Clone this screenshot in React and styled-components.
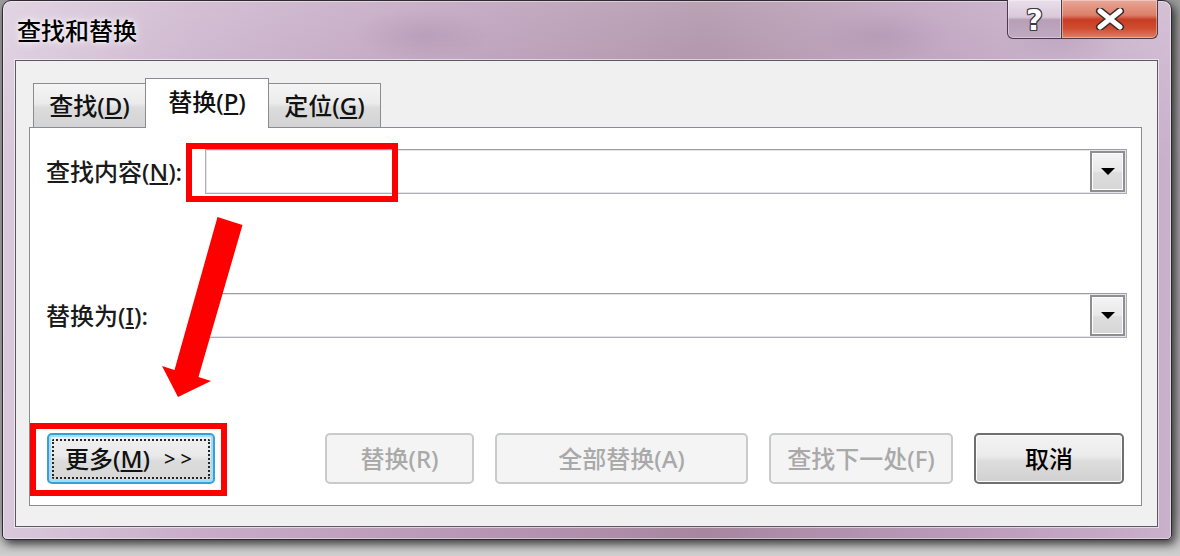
import React from "react";
import styled, { createGlobalStyle, css } from "styled-components";

const GlobalStyle = createGlobalStyle`
  html, body {
    margin: 0;
    padding: 0;
  }
  body {
    background: #bdbdbd;
    font-family: "Noto Sans", "Noto Sans CJK SC", sans-serif;
    font-weight: 500;
  }
`;

const Page = styled.div`
  position: relative;
  width: 1180px;
  height: 556px;
  overflow: hidden;
  background: linear-gradient(180deg, #9c9c9c 0%, #a8a8a8 92%, #cfcfcf 100%);
`;

const Window = styled.div`
  margin-left: 2px;
  width: 1170px;
  height: 540px;
  box-sizing: border-box;
  display: flex;
  flex-direction: column;
  border: 1px solid #2f2a31;
  border-radius: 9px 9px 5px 5px;
  background:
    linear-gradient(180deg, rgba(255, 255, 255, 0.22) 0%, rgba(255, 255, 255, 0) 30%),
    radial-gradient(ellipse 70px 26px at 420px 34px, rgba(140, 100, 140, 0.28), transparent),
    radial-gradient(ellipse 70px 26px at 880px 34px, rgba(140, 100, 140, 0.25), transparent),
    radial-gradient(ellipse 60px 24px at 1060px 38px, rgba(140, 100, 140, 0.22), transparent),
    linear-gradient(90deg, #d9c9db 0%, #c8aec9 16%, #b797b5 40%, #a7879f 60%, #b899b8 80%, #c9b0cb 100%);
  box-shadow: inset 0 0 0 1px rgba(255, 255, 255, 0.45), 3px 4px 10px rgba(0, 0, 0, 0.7);
`;

const TitleBar = styled.div`
  height: 59px;
  flex-shrink: 0;
  display: flex;
  justify-content: space-between;
  align-items: flex-start;
`;

const Title = styled.div`
  padding: 17px 0 0 14px;
  font-size: 24px;
  line-height: 26px;
  color: #000;
  text-shadow: 0 0 10px rgba(255, 255, 255, 0.9), 0 0 4px rgba(255, 255, 255, 0.8);
`;

const Captions = styled.div`
  display: flex;
  margin: -1px 13px 0 0;
`;

const CaptionButton = styled.div`
  box-sizing: border-box;
  width: ${(p) => p.$w}px;
  height: 39px;
  display: flex;
  align-items: center;
  justify-content: center;
  border: 1px solid #4a3a4c;
  border-top: none;
  box-shadow: inset 0 0 0 1px rgba(255, 255, 255, 0.35);
  ${(p) =>
    p.$close
      ? css`
          border-left: none;
          border-radius: 0 0 6px 0;
          background: linear-gradient(180deg, #e9a797 0%, #dc7f69 40%, #c83c22 52%, #cf4d31 75%, #e18165 100%);
        `
      : css`
          border-radius: 0 0 0 6px;
          background: linear-gradient(180deg, #ebdfeb 0%, #d9c8d9 45%, #b89fb8 52%, #c0a9c2 100%);
        `}
`;

const HelpGlyph = styled.span`
  font-family: "DejaVu Sans", sans-serif;
  font-weight: bold;
  font-size: 29px;
  line-height: 1;
  margin-top: 2px;
  color: #fff;
  text-shadow: 1px 0 0 #3b3b45, -1px 0 0 #3b3b45, 0 1px 0 #3b3b45, 0 -1px 0 #3b3b45,
    1px 1px 0 #3b3b45, -1px -1px 0 #3b3b45, 1px -1px 0 #3b3b45, -1px 1px 0 #3b3b45;
`;

const Client = styled.div`
  flex: 1;
  min-height: 0;
  margin: 0 13px 12px 12px;
  background: #f0f0f0;
  border: 1px solid #5e5862;
  box-shadow: 0 0 0 1px rgba(255, 255, 255, 0.55);
  padding: 17px 15px 20px 13px;
  display: flex;
  flex-direction: column;
`;

const TabStrip = styled.div`
  position: relative;
  z-index: 1;
  height: 49px;
  flex-shrink: 0;
  display: flex;
  align-items: flex-end;
  padding-left: 4px;
`;

const Tab = styled.div`
  box-sizing: border-box;
  width: ${(p) => p.$w}px;
  height: ${(p) => (p.$active ? 50 : 44)}px;
  margin-left: ${(p) => (p.$first ? 0 : -1)}px;
  margin-bottom: ${(p) => (p.$active ? -1 : 0)}px;
  border: 1px solid #898c95;
  border-bottom: none;
  display: flex;
  align-items: center;
  justify-content: center;
  padding-bottom: ${(p) => (p.$active ? 4 : 0)}px;
  font-size: 24px;
  line-height: 28px;
  color: #111;
  position: relative;
  z-index: ${(p) => (p.$active ? 2 : 1)};
  background: ${(p) =>
    p.$active ? "#fff" : "linear-gradient(180deg, #f5f5f5 0%, #ebebeb 45%, #dcdcdc 55%, #d3d3d3 100%)"};
`;

const Panel = styled.div`
  flex: 1;
  min-height: 0;
  background: #fff;
  border: 1px solid #898c95;
  padding: 21px 14px 21px 16px;
  display: flex;
  flex-direction: column;
`;

const FieldRow = styled.div`
  display: flex;
  align-items: center;
  height: 45px;
  margin-top: ${(p) => p.$gap || 0}px;
`;

const Label = styled.div`
  width: 159px;
  flex-shrink: 0;
  font-size: 24px;
  line-height: 28px;
  color: #1a1a1a;
`;

const Combo = styled.div`
  flex: 1;
  align-self: stretch;
  box-sizing: border-box;
  display: flex;
  justify-content: flex-end;
  padding: 1px;
  background: #fff;
  border: 1px solid #adadb5;
  border-top-color: #9d9da6;
  box-shadow: inset 0 0 0 1px #e4e4ea;
`;

const DropButton = styled.div`
  box-sizing: border-box;
  width: 35px;
  display: flex;
  align-items: center;
  justify-content: center;
  border: 2px solid #8f8f8f;
  box-shadow: inset 0 0 0 1px #fdfdfd;
  background: linear-gradient(180deg, #f4f4f4 0%, #e8e8e8 50%, #dedede 52%, #d6d6d6 100%);
`;

const Caret = styled.div`
  width: 0;
  height: 0;
  border-left: 7px solid transparent;
  border-right: 7px solid transparent;
  border-top: 7px solid #000;
`;

const ButtonRow = styled.div`
  margin-top: auto;
  display: flex;
  align-items: center;
  gap: 21px;
  padding: 0 3px 0 1px;
`;

const Spacer = styled.div`
  flex: 1;
`;

const Button = styled.div`
  position: relative;
  box-sizing: border-box;
  width: ${(p) => p.$w}px;
  height: 51px;
  display: flex;
  align-items: center;
  justify-content: center;
  font-size: 24px;
  line-height: 28px;
  border-radius: 5px;
  ${(p) =>
    p.$variant === "focus" &&
    css`
      color: #111;
      border: 2px solid #3a9edb;
      box-shadow: inset 0 0 0 2px #a3def8;
      background: linear-gradient(180deg, #f1f1f1 0%, #e9e9e9 45%, #dcdcdc 55%, #d6d6d6 100%);
      &::after {
        content: "";
        position: absolute;
        inset: 4px 3px 3px 3px;
        border: 2px dotted #262626;
        border-radius: 2px;
      }
    `}
  ${(p) =>
    p.$variant === "disabled" &&
    css`
      color: #a9a9a9;
      border: 2px solid #c8cacc;
      background: #f4f4f4;
    `}
  ${(p) =>
    p.$variant === "default" &&
    css`
      color: #000;
      border: 2px solid #6f6f6f;
      box-shadow: inset 0 0 0 1px #fbfbfb;
      background: linear-gradient(180deg, #f3f3f3 0%, #ebebeb 45%, #dddddd 55%, #d0d0d0 100%);
    `}
`;

const Chevrons = styled.span`
  margin-left: 14px;
  font-size: 20px;
  letter-spacing: 5px;
`;

const RedBox = styled.div`
  position: absolute;
  left: ${(p) => p.$x}px;
  top: ${(p) => p.$y}px;
  width: ${(p) => p.$w}px;
  height: ${(p) => p.$h}px;
  box-sizing: border-box;
  border: 6px solid #ff0000;
  pointer-events: none;
`;

const ArrowMark = styled.svg`
  position: absolute;
  left: 0;
  top: 0;
  pointer-events: none;
`;

const CloseIcon = () => (
  <svg width="30" height="22" viewBox="0 0 30 22">
    <path d="M5 3 L25 19 M25 3 L5 19" stroke="#3b2a2a" strokeWidth="8" strokeLinecap="round" />
    <path d="M5 3 L25 19 M25 3 L5 19" stroke="#fff" strokeWidth="5" strokeLinecap="round" />
  </svg>
);

export default function App() {
  return (
    <Page>
      <GlobalStyle />
      <Window>
        <TitleBar>
          <Title>查找和替换</Title>
          <Captions>
            <CaptionButton $w={55}>
              <HelpGlyph>?</HelpGlyph>
            </CaptionButton>
            <CaptionButton $w={96} $close>
              <CloseIcon />
            </CaptionButton>
          </Captions>
        </TitleBar>
        <Client>
          <TabStrip>
            <Tab $w={113} $first>
              查找(<u>D</u>)
            </Tab>
            <Tab $w={124} $active>
              替换(<u>P</u>)
            </Tab>
            <Tab $w={113}>
              定位(<u>G</u>)
            </Tab>
          </TabStrip>
          <Panel>
            <FieldRow>
              <Label>
                查找内容(<u>N</u>):
              </Label>
              <Combo>
                <DropButton>
                  <Caret />
                </DropButton>
              </Combo>
            </FieldRow>
            <FieldRow $gap={99}>
              <Label>
                替换为(<u>I</u>):
              </Label>
              <Combo>
                <DropButton>
                  <Caret />
                </DropButton>
              </Combo>
            </FieldRow>
            <ButtonRow>
              <Button $w={168} $variant="focus">
                更多(<u>M</u>)<Chevrons>&gt;&gt;</Chevrons>
              </Button>
              <Spacer />
              <Button $w={149} $variant="disabled">替换(R)</Button>
              <Button $w={253} $variant="disabled">全部替换(A)</Button>
              <Button $w={184} $variant="disabled">查找下一处(F)</Button>
              <Button $w={150} $variant="default">取消</Button>
            </ButtonRow>
          </Panel>
        </Client>
      </Window>
      <RedBox $x={186} $y={143} $w={212} $h={59} />
      <RedBox $x={30} $y={423} $w={197} $h={73} />
      <ArrowMark width="260" height="410" viewBox="0 0 260 410">
        <polygon
          points="217.5,217 242.5,225 198.5,377 211,381 178,397 162,366 174.5,370"
          fill="#ff0000"
        />
      </ArrowMark>
    </Page>
  );
}
